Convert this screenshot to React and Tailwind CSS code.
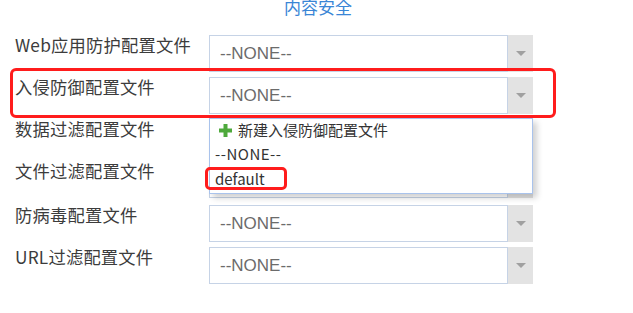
const rows = [
  "Web应用防护配置文件",
  "入侵防御配置文件",
  "数据过滤配置文件",
  "文件过滤配置文件",
  "防病毒配置文件",
  "URL过滤配置文件",
];

const SelectBox = () => (
  <div className="flex h-[37px] w-[324px]">
    <div className="flex flex-1 items-center border border-[#c6d3e6] bg-white pl-[10px] font-['Liberation_Sans',sans-serif] text-[17px] text-[#6b6b6b]">
      --NONE--
    </div>
    <div className="flex w-[25px] items-center justify-center bg-[#e3e3e3]">
      <span className="h-0 w-0 border-x-[5px] border-t-[5px] border-x-transparent border-t-[#a0a0a0]" />
    </div>
  </div>
);

const PlusIcon = () => (
  <svg width="13" height="13" viewBox="0 0 13 13" className="shrink-0">
    <rect x="4.5" y="0" width="4" height="13" fill="#4ea93c" />
    <rect x="0" y="4.5" width="13" height="4" fill="#4ea93c" />
  </svg>
);

export default function App() {
  return (
    <div className="relative h-[313px] w-[633px] overflow-hidden bg-white font-['Noto_Sans_CJK_SC','Noto_Sans',sans-serif]">
      <div className="flex h-[35px] justify-center pl-[3px]">
        <span className="-mt-[2px] text-[17px] leading-[18px] text-[#3a86d6]">内容安全</span>
      </div>

      <div className="flex flex-col">
        {rows.map((label, i) => (
          <div key={label} className={`flex items-start ${i === 3 ? "h-[44px]" : "h-[42px]"}`}>
            <div className="w-[209px] pl-[15px] text-[17.3px] leading-[20px] tracking-[0.2px] text-[#3c3c3c]">{label}</div>
            <SelectBox />
          </div>
        ))}
      </div>

      {/* open dropdown */}
      <div className="absolute left-[209px] top-[118px] w-[324px] border border-[#a9c3ec] bg-white pb-[2px] text-[15px] text-[#333] shadow-[4px_4px_6px_rgba(0,0,0,0.18)]">
        <div className="flex h-[22px] items-center gap-[6px] pl-[9px]">
          <PlusIcon />
          <span className="leading-[22px]">新建入侵防御配置文件</span>
        </div>
        <div className="h-[25px] pl-[5px] leading-[25px] tracking-[0.5px]">--NONE--</div>
        <div className="h-[25px] pl-[5px] leading-[25px]">default</div>
      </div>

      {/* annotations */}
      <div className="absolute left-[10px] top-[68px] h-[50px] w-[546px] rounded-[6px] border-[3px] border-[#ff1c1c]" />
      <div className="absolute left-[205px] top-[167px] h-[23px] w-[82px] rounded-[5px] border-[3px] border-[#ff1c1c]" />
    </div>
  );
}
